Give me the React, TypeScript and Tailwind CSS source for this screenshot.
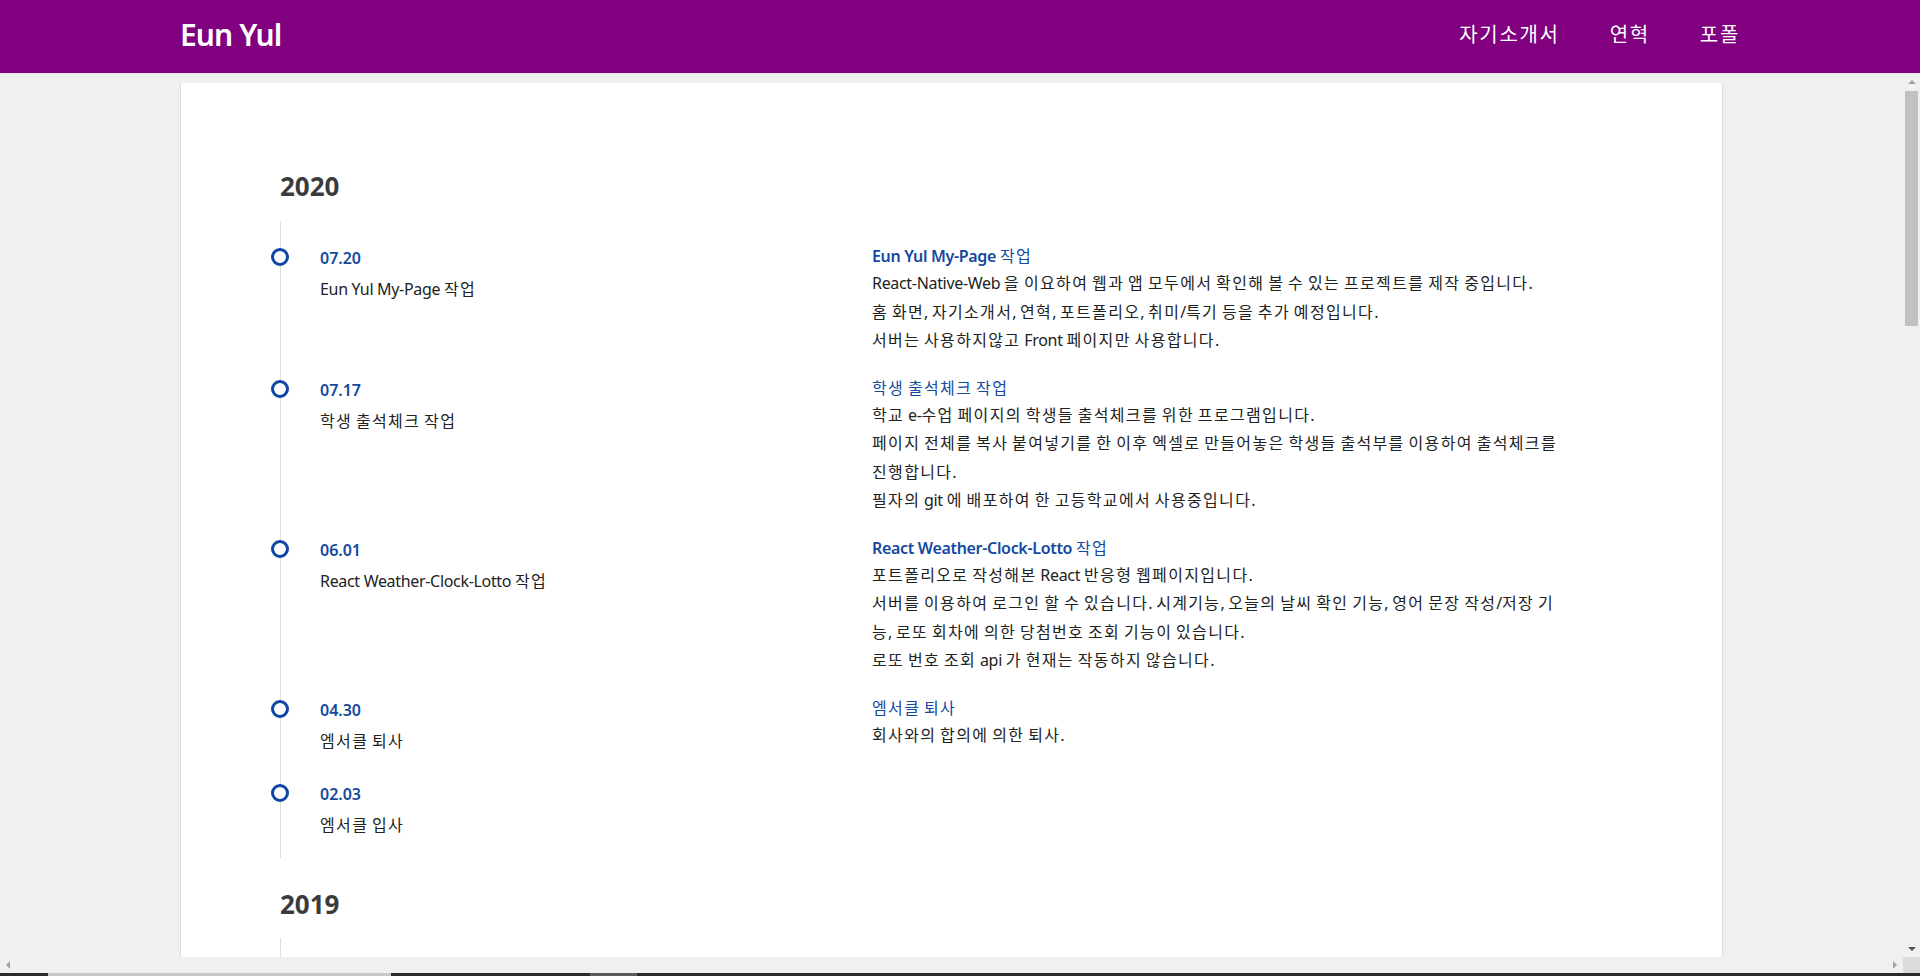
const YEARS = [
  {
    year: "2020",
    items: [
      {
        date: "07.20",
        label: "Eun Yul My-Page 작업",
        title: "Eun Yul My-Page 작업",
        lines: [
          "React-Native-Web 을 이요하여 웹과 앱 모두에서 확인해 볼 수 있는 프로젝트를 제작 중입니다.",
          "홈 화면, 자기소개서, 연혁, 포트폴리오, 취미/특기 등을 추가 예정입니다.",
          "서버는 사용하지않고 Front 페이지만 사용합니다.",
        ],
      },
      {
        date: "07.17",
        label: "학생 출석체크 작업",
        title: "학생 출석체크 작업",
        lines: [
          "학교 e-수업 페이지의 학생들 출석체크를 위한 프로그램입니다.",
          "페이지 전체를 복사 붙여넣기를 한 이후 엑셀로 만들어놓은 학생들 출석부를 이용하여 출석체크를",
          "진행합니다.",
          "필자의 git 에 배포하여 한 고등학교에서 사용중입니다.",
        ],
      },
      {
        date: "06.01",
        label: "React Weather-Clock-Lotto 작업",
        title: "React Weather-Clock-Lotto 작업",
        lines: [
          "포트폴리오로 작성해본 React 반응형 웹페이지입니다.",
          "서버를 이용하여 로그인 할 수 있습니다. 시계기능, 오늘의 날씨 확인 기능, 영어 문장 작성/저장 기",
          "능, 로또 회차에 의한 당첨번호 조회 기능이 있습니다.",
          "로또 번호 조회 api 가 현재는 작동하지 않습니다.",
        ],
      },
      {
        date: "04.30",
        label: "엠서클 퇴사",
        title: "엠서클 퇴사",
        lines: ["회사와의 합의에 의한 퇴사."],
      },
      { date: "02.03", label: "엠서클 입사", title: "", lines: [] as string[] },
    ],
  },
];

// hangul glyphs in the original font run a bit wider than Noto CJK, latin a bit narrower
const Hangul = ({ text, latinClass = "tracking-[-0.02em]" }: { text: string; latinClass?: string }) => (
  <>
    {text.split(/([가-힣]+)/).map((part, i) =>
      /[가-힣]/.test(part) ? (
        <span key={i} className="font-normal tracking-[0.084em]">
          {part}
        </span>
      ) : (
        <span key={i} className={latinClass}>
          {part}
        </span>
      )
    )}
  </>
);

type Item = (typeof YEARS)[number]["items"][number];

const TimelineItem = ({ item }: { item: Item }) => (
  <div className="flex">
    <div className="-ml-[10px] mt-[5px] h-[18px] w-[18px] shrink-0 rounded-full border-[3px] border-[#0d47a1] bg-white" />
    <div className="ml-[31px] w-[552px] shrink-0 pt-[2px] pb-[4px]">
      <div className="text-[16px] font-semibold leading-[26px] text-[#1549a0]">{item.date}</div>
      <div className="mt-[4px] whitespace-nowrap text-[16px] leading-[28px] text-[#222]">
        <Hangul text={item.label} />
      </div>
    </div>
    {item.title && (
      <div className="flex-1">
        <div className="whitespace-nowrap text-[16px] leading-[26px] text-[#1549a0]">
          <Hangul text={item.title} latinClass="font-semibold tracking-[-0.02em]" />
        </div>
        {item.lines.map((line, i) => (
          <div key={i} className="whitespace-nowrap text-[16px] leading-[28.5px] text-[#222]">
            <Hangul text={line} />
          </div>
        ))}
      </div>
    )}
  </div>
);

const Arrow = ({ dir, color }: { dir: "up" | "down" | "left" | "right"; color: string }) => {
  const cls = {
    up: "border-x-[4px] border-b-[4px] border-x-transparent",
    down: "border-x-[4px] border-t-[4px] border-x-transparent",
    left: "border-y-[4px] border-r-[4px] border-y-transparent",
    right: "border-y-[4px] border-l-[4px] border-y-transparent",
  }[dir];
  const side = { up: "borderBottomColor", down: "borderTopColor", left: "borderRightColor", right: "borderLeftColor" }[dir];
  return <div className={`h-0 w-0 ${cls}`} style={{ [side]: color }} />;
};

export default function App() {
  return (
    <div className="flex h-[976px] w-[1920px] flex-col overflow-hidden bg-[#f0f0f0] font-['Noto_Sans','Noto_Sans_CJK_KR',sans-serif]">
      {/* HEADER */}
      <header className="flex h-[73px] shrink-0 items-center justify-between bg-[#800080] px-[180px] pb-[4px] text-white">
        <span className="text-[30px] font-semibold leading-none tracking-[-0.03em]">Eun Yul</span>
        <nav className="flex items-center gap-[50px] text-[20px] leading-none">
          <span>
            <Hangul text="자기소개서" />
          </span>
          <span>
            <Hangul text="연혁" />
          </span>
          <span>
            <Hangul text="포폴" />
          </span>
        </nav>
      </header>

      <div className="flex min-h-0 flex-1">
        <div className="flex min-w-0 flex-1 flex-col">
          {/* PAGE */}
          <main className="min-h-0 flex-1 overflow-hidden">
            <div className="mx-auto mt-[10px] flex w-[1543px] flex-col gap-[29px] border-x border-[#dcdcdc] bg-white pt-[86px] pl-[99px] pb-[200px]">
              {YEARS.map((y) => (
                <section key={y.year}>
                  <h2 className="text-[26px] font-bold leading-[34px] text-[#3b3b3b]">{y.year}</h2>
                  <div className="mt-[18px] flex flex-col gap-[20px] border-l border-[#dddddd] pt-[22px] pb-[15px]">
                    {y.items.map((it) => (
                      <TimelineItem key={it.date} item={it} />
                    ))}
                  </div>
                </section>
              ))}
              <section>
                <h2 className="text-[26px] font-bold leading-[34px] text-[#3b3b3b]">2019</h2>
                <div className="mt-[17px] h-[200px] border-l border-[#dddddd]" />
              </section>
            </div>
          </main>

          {/* horizontal scrollbar */}
          <div className="flex h-[16px] shrink-0 items-center justify-between bg-[#f0f0f0] px-[6px]">
            <Arrow dir="left" color="#a3a3a3" />
            <Arrow dir="right" color="#a3a3a3" />
          </div>
        </div>

        {/* vertical scrollbar */}
        <div className="flex w-[17px] shrink-0 flex-col bg-[#f0f0f0]">
          <div className="flex h-[17px] items-center justify-center">
            <Arrow dir="up" color="#a3a3a3" />
          </div>
          <div className="mt-[1px] ml-[2px] h-[235px] w-[13px] bg-[#c1c1c1]" />
          <div className="flex-1" />
          <div className="flex h-[17px] items-center justify-center">
            <Arrow dir="down" color="#505050" />
          </div>
          <div className="h-[16px] bg-[#dcdcdc]" />
        </div>
      </div>

      {/* bottom edge */}
      <div className="flex h-[3px] shrink-0 bg-[#2b2b2b]">
        <div className="w-[48px]" />
        <div className="w-[343px] bg-[#c8c8c8]" />
        <div className="w-[199px]" />
        <div className="w-[47px] bg-[#5a5a5a]" />
      </div>
    </div>
  );
}
